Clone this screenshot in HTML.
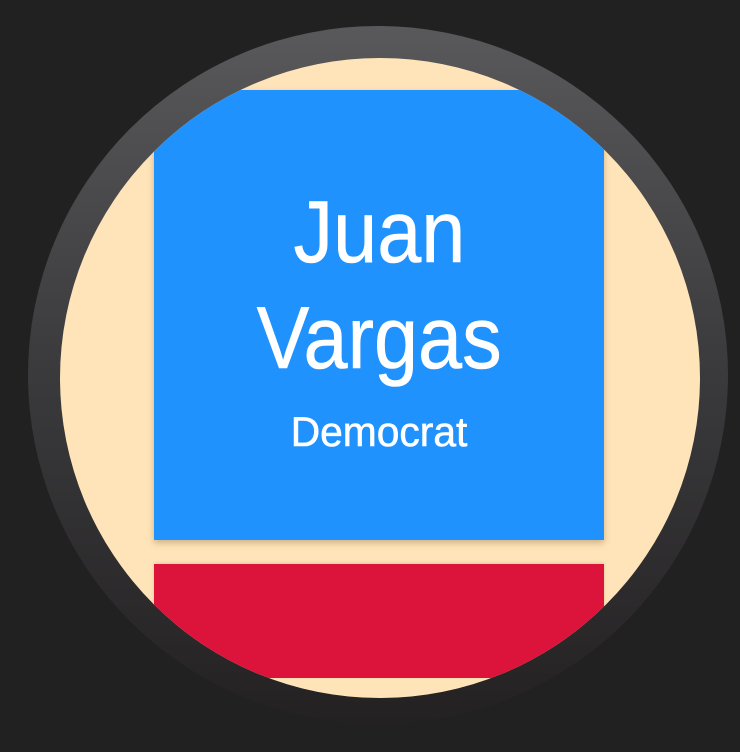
<!DOCTYPE html>
<html><head><style>
html,body{margin:0;padding:0;background:#212121;width:740px;height:752px;overflow:hidden}
.bezel{position:absolute;left:28px;top:26px;width:700px;height:698px;border-radius:50%;background:linear-gradient(#59595b,#3a3a3c 50%,#242122)}
.face{position:absolute;left:60px;top:58px;width:640px;height:640px;border-radius:50%;background:#fee4b8;overflow:hidden}
.blue{position:absolute;left:94px;top:32px;width:450px;height:450px;background:#2092fe;box-shadow:0 3px 6px rgba(120,90,40,.35)}
.red{position:absolute;left:94px;top:506px;width:450px;height:114px;background:#dc143c;box-shadow:0 -1px 3px rgba(120,90,40,.2)}
.t{position:absolute;left:0;width:450px;text-align:center;color:#fff;font-family:"Liberation Sans",sans-serif;white-space:nowrap;-webkit-text-stroke:0.6px #fff}
.t span{display:inline-block;transform:scaleX(.9)}
</style></head><body>
<div class="bezel"></div>
<div class="face">
<div class="blue">
<div class="t" style="top:92px;font-size:88px;line-height:100px"><span>Juan</span></div>
<div class="t" style="top:198px;font-size:88px;line-height:100px"><span>Vargas</span></div>
<div class="t" style="top:317px;font-size:42px;line-height:50px"><span style="transform:scaleX(.97)">Democrat</span></div>
</div>
<div class="red"></div>
</div>
</body></html>
